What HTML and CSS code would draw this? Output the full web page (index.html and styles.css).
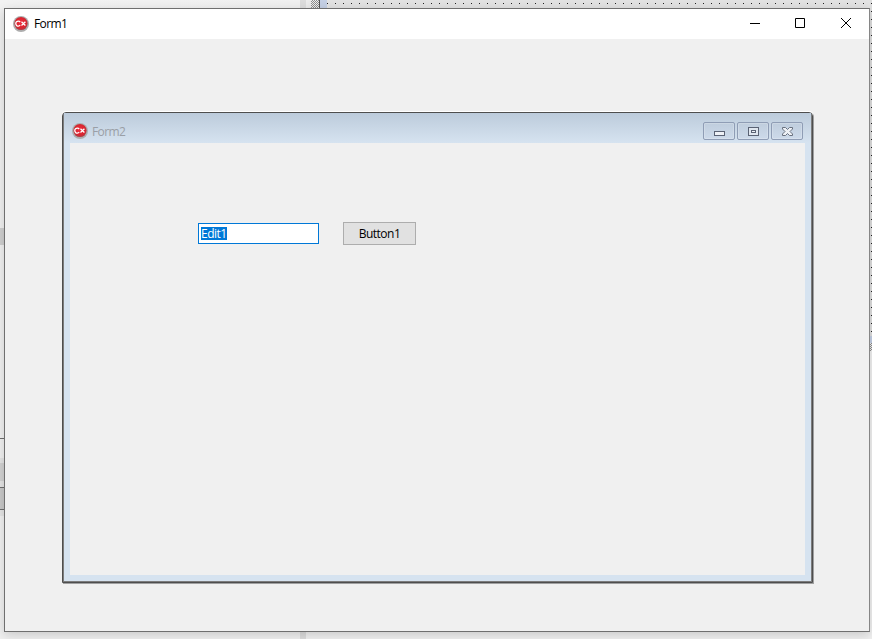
FILE: index.html
```html
<!DOCTYPE html>
<html lang="en">
<head>
<meta charset="utf-8">
<title>Form1</title>
<link rel="stylesheet" href="styles.css">
</head>
<body>
<div class="desktop">
  <div class="top-splitter"></div>
  <div class="bottom-split"></div>
  <div class="top-strip"></div>
  <div class="top-checker"></div>
  <div class="top-line"></div>
  <div class="top-sel"></div>
  <div class="top-dots"></div>
  <div class="right-strip"></div>
  <div class="right-dots"></div>
  <div class="right-sel"></div>
  <div class="right-checker"></div>
  <div class="left-mark"></div>
  <div class="left-panel p1"></div>
  <div class="left-panel p2"></div>
  <div class="left-panel p3"></div>
  <div class="left-line l1"></div>
  <div class="left-line l2"></div>
  <div class="left-line l3"></div>

  <section class="form1">
    <header class="form1-title">
      <svg class="cx cx1" viewBox="0 0 16 16"><use href="#cx-icon"/></svg>
      <span class="form1-text">Form1</span>
      <div class="caption-buttons">
        <svg class="cap" viewBox="0 0 46 30"><path d="M19 14.500h10" stroke="#000" fill="none"/></svg>
        <svg class="cap" viewBox="0 0 46 30"><path d="M18.500 9.500h9v9h-9z" stroke="#000" fill="none"/></svg>
        <svg class="cap" viewBox="0 0 46 30"><path d="M18 9l10 10M28 9L18 19" stroke="#000" fill="none"/></svg>
      </div>
    </header>
    <div class="form1-body">
      <section class="form2">
        <header class="form2-title">
          <svg class="cx" viewBox="0 0 16 16"><use href="#cx-icon"/></svg>
          <span class="form2-text">Form2</span>
          <div class="mdi-buttons">
            <div class="mdi-btn"><svg viewBox="0 0 32 18"><rect x="11.500" y="9.500" width="10" height="4" fill="#eef1f6" stroke="#5a6274"/></svg></div>
            <div class="mdi-btn"><svg viewBox="0 0 32 18"><rect x="11.500" y="5.500" width="10" height="8" fill="#dfe6ef" stroke="#5a6274"/><rect x="14.500" y="8.500" width="4" height="2" fill="#eef1f6" stroke="#5a6274"/></svg></div>
            <div class="mdi-btn"><svg viewBox="0 0 32 18"><path d="M11.500 5.500h3l2 2 2-2h3V7L19 9.500 21.500 12v1.500h-3l-2-2-2 2h-3V12L14 9.500 11.500 7z" fill="#eef1f6" stroke="#69717f"/></svg></div>
          </div>
        </header>
        <div class="form2-client">
          <div class="controls">
            <div class="edit"><span class="edit-sel">Edit1</span></div>
            <button class="btn" type="button">Button1</button>
          </div>
        </div>
      </section>
    </div>
  </section>
</div>
<svg class="defs" width="0" height="0">
  <defs>
    <radialGradient id="cx-grad" cx="50%" cy="45%" r="55%">
      <stop offset="0" stop-color="#ee2f3f"/>
      <stop offset="0.72" stop-color="#d9252f"/>
      <stop offset="1" stop-color="#a8404a"/>
    </radialGradient>
    <g id="cx-icon">
      <circle cx="8" cy="8" r="8" fill="#adadad"/>
      <circle cx="8" cy="7.500" r="6.600" fill="url(#cx-grad)"/>
      <path d="M7.200 6A2.500 2.500 0 1 0 7.200 9.200M8.500 5.700l3.900 3.800M12.400 5.700L8.500 9.500" fill="none" stroke="#fff" stroke-width="1.300"/>
    </g>
  </defs>
</svg>
</body>
</html>
```
FILE: styles.css
```css
html, body {
  margin: 0;
  padding: 0;
}
body {
  width: 872px;
  height: 639px;
  overflow: hidden;
  font-family: "Open Sans", "Noto Sans", sans-serif;
}
.defs {
  position: absolute;
}
.desktop {
  position: relative;
  width: 872px;
  height: 639px;
  overflow: hidden;
  background: #f0f0f0;
}
.top-strip {
  position: absolute;
  left: 0;
  top: 0;
  width: 872px;
  height: 8px;
  background: linear-gradient(90deg, #f2f2f2 0, #f0f0f0 300px, #e2e2e2 320px, #e2e2e2 100%);
}
.top-splitter {
  position: absolute;
  left: 300px;
  top: 0;
  width: 6px;
  height: 639px;
  background: #dcdcdc;
  z-index: 1;
}
.top-checker {
  position: absolute;
  left: 311px;
  top: 0;
  width: 8px;
  height: 8px;
  background: repeating-conic-gradient(#8c8c8c 0 25%, #eeeeee 0 50%) 0 0 / 2px 2px;
}
.top-line {
  position: absolute;
  left: 319px;
  top: 0;
  width: 1px;
  height: 8px;
  background: #555;
}
.top-sel {
  position: absolute;
  left: 320px;
  top: 0;
  width: 7px;
  height: 8px;
  background: #c4cfe4;
}
.top-dots {
  position: absolute;
  left: 327px;
  top: 3px;
  width: 545px;
  height: 1px;
  background: linear-gradient(90deg, #222 1px, transparent 1px) 0 0 / 8px 1px;
}
.right-strip {
  position: absolute;
  left: 870px;
  top: 0;
  width: 2px;
  height: 336px;
  background: #dedede;
}
.right-dots {
  position: absolute;
  left: 871px;
  top: 0;
  width: 1px;
  height: 335px;
  background: linear-gradient(#222 1px, transparent 1px) 0 3px / 1px 8px;
}
.right-sel {
  position: absolute;
  left: 870px;
  top: 336px;
  width: 2px;
  height: 7px;
  background: #c4cfe4;
}
.right-checker {
  position: absolute;
  left: 870px;
  top: 343px;
  width: 2px;
  height: 8px;
  background: repeating-conic-gradient(#8c8c8c 0 25%, #eeeeee 0 50%) 0 0 / 2px 2px;
}
.left-mark {
  position: absolute;
  left: 0;
  top: 228px;
  width: 5px;
  height: 17px;
  background: #cfcfcf;
}
.left-panel {
  position: absolute;
  left: 0;
  width: 5px;
}
.p1 {
  top: 458px;
  height: 29px;
  background: linear-gradient(#e4e4e4 0 5px, #d2d2d2 5px 23px, #e4e4e4 23px);
}
.p2 {
  top: 487px;
  height: 22px;
  background: #c8c8c8;
}
.p3 {
  top: 509px;
  height: 7px;
  background: #e4e4e4;
}
.left-line {
  position: absolute;
  left: 0;
  width: 5px;
  height: 1px;
  background: #6e6e6e;
}
.l1 { top: 438px; }
.l2 { top: 487px; }
.l3 { top: 509px; }
.bottom-split {
  position: absolute;
  left: 300px;
  top: 632px;
  width: 6px;
  height: 7px;
  background: #c6c6c6;
}
.form1 {
  position: absolute;
  z-index: 2;
  left: 4px;
  top: 8px;
  width: 866px;
  height: 624px;
  box-sizing: border-box;
  display: flex;
  flex-direction: column;
  border: 1px solid #6f6f6f;
  border-right-color: #868686;
  box-shadow: 0 3px 10px rgba(0, 0, 0, 0.16);
  background: #f0f0f0;
}
.form1-title {
  display: flex;
  align-items: center;
  height: 30px;
  flex: none;
  box-sizing: border-box;
  background: #fff;
  padding: 0 0 1px 8px;
}
.cx {
  display: block;
  width: 16px;
  height: 16px;
  flex: none;
}
.cx1 {
  margin-top: 1px;
}
.form1-text {
  margin-left: 5px;
  font-size: 12px;
  letter-spacing: -0.6px;
  color: #000;
}
.caption-buttons {
  margin: -1px 0 -2px auto;
  display: flex;
}
.cap {
  display: block;
  width: 46px;
  height: 30px;
}
.form1-body {
  flex: 1;
  padding: 73px 56px 48px 57px;
  min-height: 0;
  display: flex;
}
.form2 {
  flex: 1;
  display: flex;
  flex-direction: column;
  box-sizing: border-box;
  border: 1px solid #4e4e4e;
  border-radius: 4px 4px 0 0;
  background: #d6e3f0;
  box-shadow: 0 -1px 0 #fff, 1px 1px 0 #a0a0a0, inset 0 0 0 1px #7c7c7c;
  padding: 0 7px 7px 7px;
}
.form2-title {
  display: flex;
  align-items: center;
  height: 30px;
  flex: none;
  margin: 0 -6px;
  padding: 6px 8px 0 8px;
  box-sizing: border-box;
  background: linear-gradient(#bccbdb, #d6e3f0);
}
.form2-text {
  margin-left: 4px;
  font-size: 12px;
  letter-spacing: -0.6px;
  color: #9a9fa6;
}
.mdi-buttons {
  margin-left: auto;
  display: flex;
  gap: 2px;
}
.mdi-btn {
  width: 32px;
  height: 18px;
  box-sizing: border-box;
  border: 1px solid #8f9db5;
  border-radius: 2px;
  background: linear-gradient(#bfcddd, #cddaea);
  box-shadow: inset 0 0 0 1px rgba(255, 255, 255, 0.2);
  overflow: hidden;
}
.mdi-btn svg {
  display: block;
  width: 32px;
  height: 18px;
  margin: -1px;
}
.form2-client {
  flex: 1;
  background: #f0f0f0;
  min-height: 0;
  padding: 79px 0 0 128px;
}
.controls {
  display: flex;
  align-items: center;
  gap: 24px;
}
.edit {
  width: 121px;
  height: 21px;
  box-sizing: border-box;
  border: 1px solid #0078d7;
  background: #fff;
  display: flex;
  align-items: center;
  padding-left: 2px;
  font-size: 12px;
  letter-spacing: -0.5px;
}
.edit-sel {
  background: #0078d7;
  color: #fff;
  line-height: 13px;
}
.btn {
  width: 73px;
  height: 23px;
  box-sizing: border-box;
  border: 1px solid #adadad;
  background: #e1e1e1;
  padding: 0;
  color: #000;
  font-family: inherit;
  font-size: 12px;
  letter-spacing: -0.5px;
}
```
